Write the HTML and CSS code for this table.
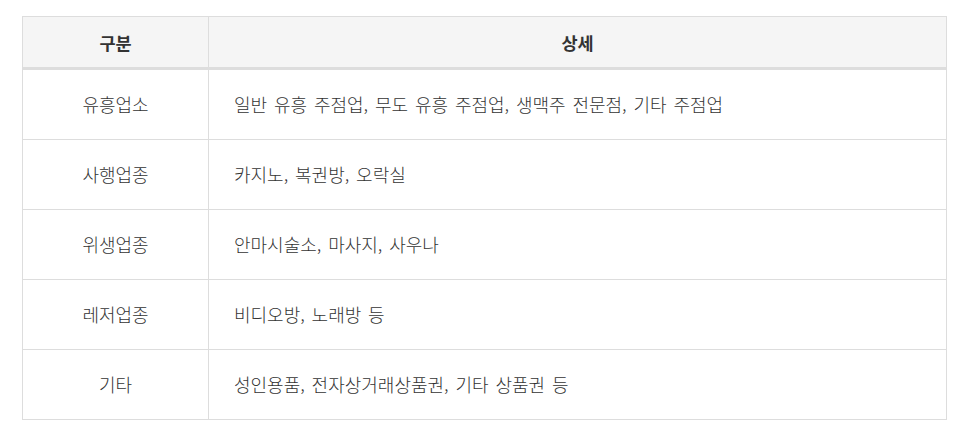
FILE: index.html
```html
<!DOCTYPE html>
<html lang="ko">
<head>
<meta charset="utf-8">
<link rel="stylesheet" href="styles.css">
</head>
<body>
<div class="wrap">
<table class="tbl">
  <thead>
    <tr><th class="c1">구분</th><th class="c2">상세</th></tr>
  </thead>
  <tbody>
    <tr><td class="c1">유흥업소</td><td class="c2">일반 유흥 주점업, 무도 유흥 주점업, 생맥주 전문점, 기타 주점업</td></tr>
    <tr><td class="c1">사행업종</td><td class="c2">카지노, 복권방, 오락실</td></tr>
    <tr><td class="c1">위생업종</td><td class="c2">안마시술소, 마사지, 사우나</td></tr>
    <tr><td class="c1">레저업종</td><td class="c2">비디오방, 노래방 등</td></tr>
    <tr><td class="c1">기타</td><td class="c2">성인용품, 전자상거래상품권, 기타 상품권 등</td></tr>
  </tbody>
</table>
</div>
</body>
</html>
```
FILE: styles.css
```css
html, body { margin: 0; padding: 0; background: #fff; }
body { font-family: "Noto Sans CJK KR", "Noto Sans", sans-serif; color: #333; }
.wrap { padding: 16px 0 0 22px; }
.tbl { border-collapse: collapse; width: 925px; table-layout: fixed; font-size: 18px; line-height: 1.2; word-spacing: 1.8px; }
.tbl th, .tbl td { border: 1px solid #ddd; }
.tbl th { background: #f5f5f5; height: 50px; font-weight: bold; text-align: center; padding: 0; font-size: 17.5px; }
.tbl thead th { border-bottom: 3px solid #ddd; }
.tbl td { height: 69px; padding: 0; font-weight: 300; }
.tbl .c1 { width: 185px; text-align: center; }
.tbl td.c2 { text-align: left; padding-left: 25px; }
```
